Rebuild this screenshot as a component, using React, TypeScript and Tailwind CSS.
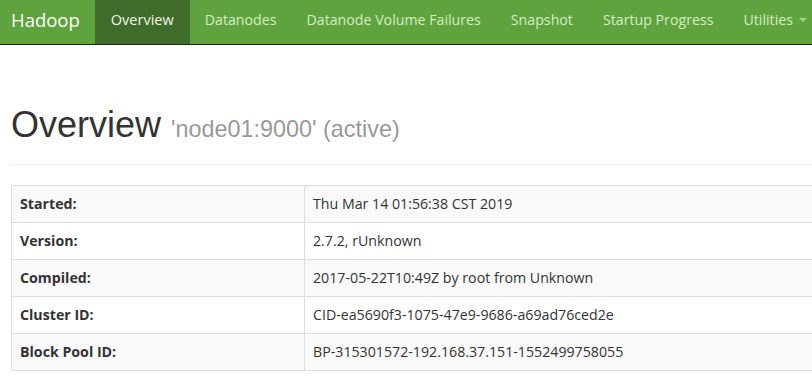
import React from "react";

const rows: [string, string][] = [
  ["Started:", "Thu Mar 14 01:56:38 CST 2019"],
  ["Version:", "2.7.2, rUnknown"],
  ["Compiled:", "2017-05-22T10:49Z by root from Unknown"],
  ["Cluster ID:", "CID-ea5690f3-1075-47e9-9686-a69ad76ced2e"],
  ["Block Pool ID:", "BP-315301572-192.168.37.151-1552499758055"],
];

const navItems = ["Datanodes", "Datanode Volume Failures", "Snapshot", "Startup Progress"];

export default function App() {
  return (
    <div className="w-[812px] h-[386px] overflow-hidden bg-white" style={{ fontFamily: '"Open Sans", "Noto Sans", sans-serif' }}>
      <div className="flex h-[45px] items-stretch whitespace-nowrap bg-[#5fa33e] border-b border-[#1e2b18] w-[900px]">
        <div className="flex items-center pb-[4px] pl-[11px] pr-[15px] text-[18.5px] text-white">Hadoop</div>
        <div className="flex items-center pb-[4px] px-[16px] bg-[#3f6b2b] text-[14.5px] text-[#f4f6e6]">Overview</div>
        {navItems.map((n) => (
          <div key={n} className="flex items-center pb-[4px] px-[15px] text-[14.2px] text-[#d3eec3]">{n}</div>
        ))}
        <div className="flex items-center pb-[4px] pl-[15px] text-[14.2px] text-[#d3eec3] gap-[6px]">
          Utilities
          <span className="inline-block w-0 h-0 border-l-[4px] border-r-[4px] border-t-[4px] border-l-transparent border-r-transparent border-t-[#a6cf8f]" />
        </div>
      </div>
      <div className="pl-[11px]">
        <div className="mt-[40px] pt-[20px] mb-[20px] pb-[9px] border-b border-[#eeeeee] w-[900px]">
          <h1 className="mb-[10px] text-[36px] leading-[1.1] text-[#333333]" style={{ fontFamily: '"Liberation Sans", Arial, sans-serif' }}>
            Overview <span className="text-[23.4px] text-[#999999]">'node01:9000' (active)</span>
          </h1>
        </div>
        <table className="w-[1000px] border-collapse border border-[#dddddd] text-[14.2px] text-[#333333]">
          <tbody>
            {rows.map(([k, v], i) => (
              <tr key={k} className={i % 2 === 0 ? "bg-[#f9f9f9]" : "bg-white"}>
                <th className="w-[293px] border border-[#dddddd] px-[8px] py-[8px] text-left font-bold leading-[20px]">{k}</th>
                <td className="border border-[#dddddd] px-[8px] py-[8px] leading-[20px]">{v}</td>
              </tr>
            ))}
          </tbody>
        </table>
      </div>
    </div>
  );
}
